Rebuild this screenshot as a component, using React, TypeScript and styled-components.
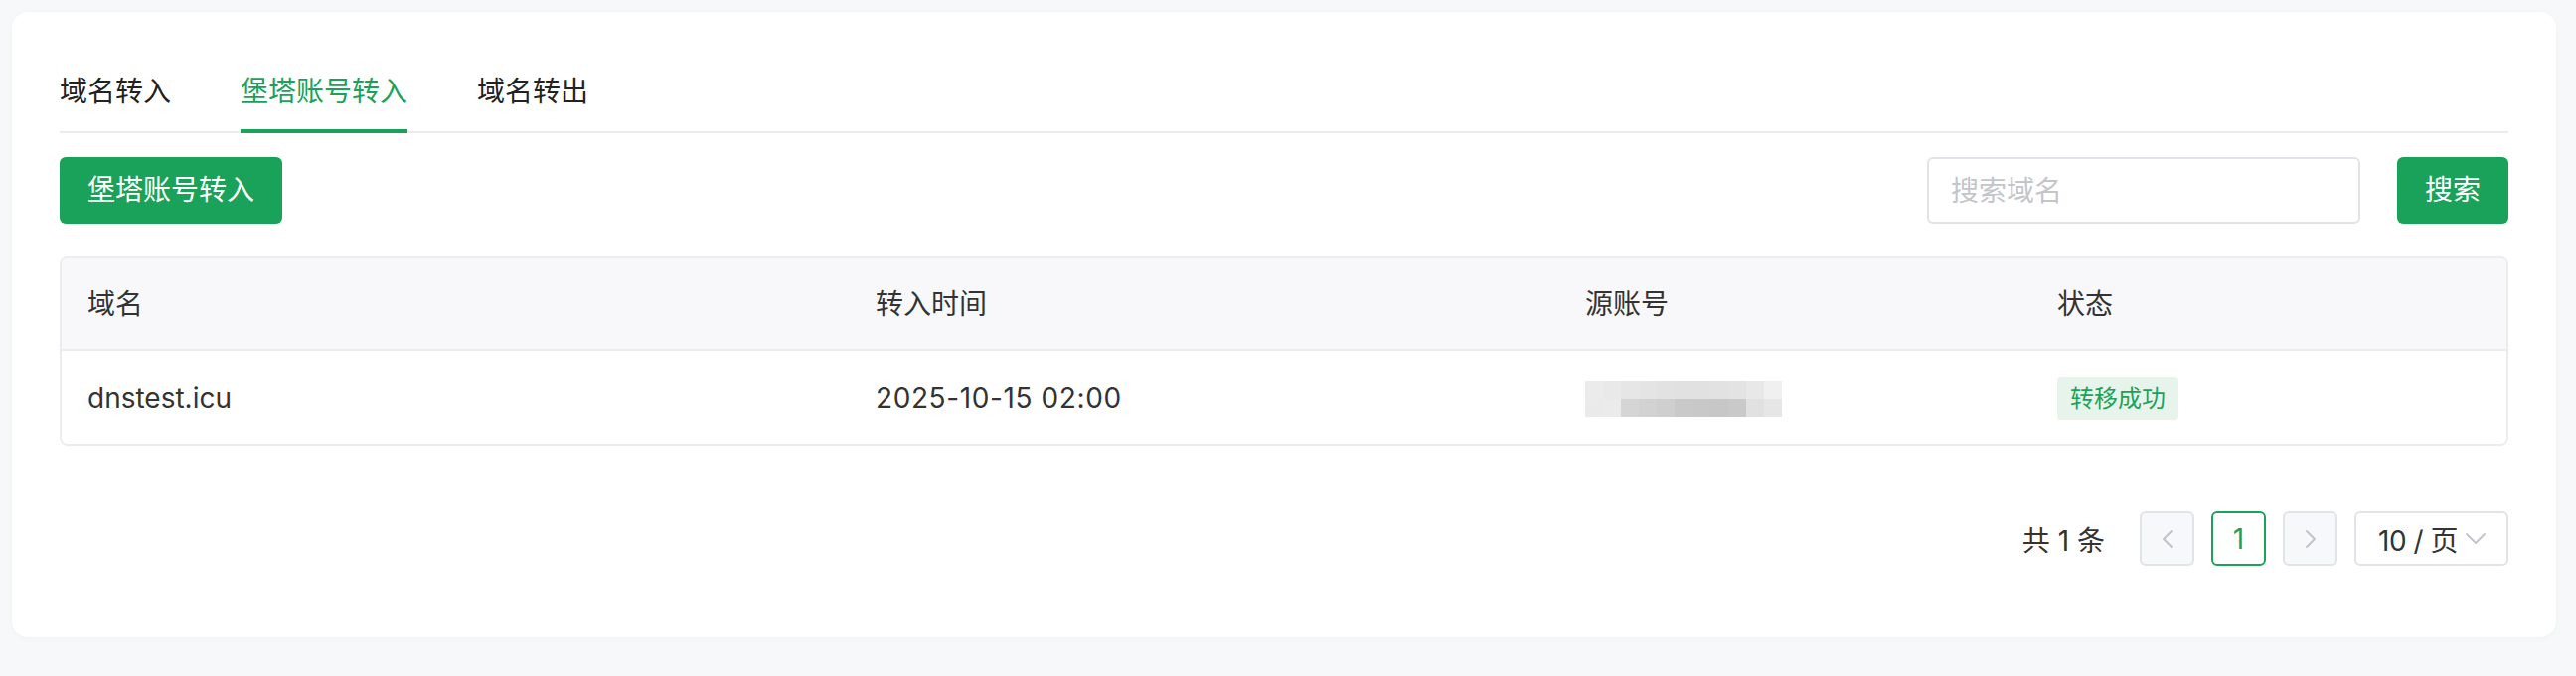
import React from "react";
import styled, { createGlobalStyle } from "styled-components";

const GREEN = "#1ba25a";

const GlobalStyle = createGlobalStyle`
  html, body {
    margin: 0;
    padding: 0;
    background: #f7f8fa;
  }
  body {
    font-family: Inter, "Noto Sans CJK SC", sans-serif;
    color: #333333;
  }
  * { box-sizing: border-box; }
`;

const Page = styled.div`
  height: 680px;
  padding: 12px 20px 0 12px;
  background: #f7f8fa;
  overflow: hidden;
`;

const Card = styled.div`
  background: #ffffff;
  border-radius: 16px;
  padding: 60px 48px 72px;
  box-shadow: 0 1px 6px rgba(0, 0, 0, 0.035);
`;

const TabNav = styled.div`
  display: flex;
  gap: 70px;
  border-bottom: 2px solid #ebecf0;
`;

const Tab = styled.div<{ $active?: boolean }>`
  font-size: 28px;
  line-height: 40px;
  padding-bottom: 18px;
  margin-bottom: -2px;
  color: ${(p) => (p.$active ? GREEN : "#222222")};
  border-bottom: 4px solid ${(p) => (p.$active ? GREEN : "transparent")};
  cursor: pointer;
`;

const Toolbar = styled.div`
  display: flex;
  justify-content: space-between;
  align-items: center;
  margin-top: 24px;
`;

const SearchGroup = styled.div`
  display: flex;
  align-items: center;
  gap: 37px;
`;

const PrimaryButton = styled.button<{ $pad?: number }>`
  height: 67px;
  padding: 0 ${(p) => p.$pad ?? 28}px;
  border: none;
  border-radius: 6px;
  background: ${GREEN};
  color: #ffffff;
  font-family: inherit;
  font-size: 28px;
  line-height: 67px;
  cursor: pointer;
`;

const SearchInput = styled.input`
  width: 436px;
  height: 67px;
  padding: 0 22px;
  border: 2px solid #e2e3e8;
  border-radius: 6px;
  font-family: inherit;
  font-size: 28px;
  color: #333;
  outline: none;
  &::placeholder {
    color: #c3c5cb;
  }
`;

const Table = styled.div`
  margin-top: 33px;
  border: 2px solid #ececf0;
  border-radius: 8px;
  overflow: hidden;
`;

const Row = styled.div<{ $head?: boolean }>`
  display: grid;
  grid-template-columns: 793px 714px 475px 1fr;
  align-items: center;
  height: ${(p) => (p.$head ? 93 : 94)}px;
  background: ${(p) => (p.$head ? "#f8f8fa" : "#ffffff")};
  border-bottom: ${(p) => (p.$head ? "2px solid #ececf0" : "none")};
`;

const Cell = styled.div<{ $spacing?: number }>`
  padding: 0 26px;
  font-size: 28px;
  line-height: 40px;
  color: #333333;
  white-space: nowrap;
  letter-spacing: ${(p) => p.$spacing ?? 0}px;
`;

const Mosaic = styled.div`
  display: grid;
  grid-template-columns: repeat(11, 18px);
  grid-template-rows: 18px 18px;
  margin-top: 2px;
`;

const Pixel = styled.span<{ $c: string }>`
  display: block;
  background: ${(p) => p.$c};
`;

const Badge = styled.span`
  display: inline-block;
  height: 43px;
  padding: 0 13px;
  border-radius: 4px;
  background: #e7f4ec;
  color: ${GREEN};
  font-size: 24px;
  line-height: 43px;
  letter-spacing: 0;
`;

const Pagination = styled.div`
  display: flex;
  justify-content: flex-end;
  align-items: center;
  gap: 17px;
  margin-top: 65px;
`;

const Total = styled.span`
  font-size: 28px;
  color: #333;
  margin-right: 18px;
`;

const PageBox = styled.div<{ $active?: boolean; $disabled?: boolean }>`
  width: 55px;
  height: 55px;
  display: flex;
  align-items: center;
  justify-content: center;
  border: 2px solid ${(p) => (p.$active ? GREEN : "#e2e3e8")};
  border-radius: 6px;
  background: ${(p) => (p.$disabled ? "#f7f8fa" : "#ffffff")};
  color: ${(p) => (p.$active ? GREEN : "#333")};
  font-size: 28px;
`;

const SizeSelect = styled.div`
  width: 155px;
  height: 55px;
  display: flex;
  align-items: center;
  gap: 8px;
  padding: 0 0 0 22px;
  border: 2px solid #e2e3e8;
  border-radius: 6px;
  font-size: 28px;
  color: #333;
`;

const SizeText = styled.span`
  letter-spacing: -0.5px;
`;

const topRow = [
  "#ebebeb", "#e9e9e9", "#e6e6e6", "#e4e4e4", "#e2e2e2", "#e1e1e1",
  "#e1e1e1", "#e2e2e2", "#e3e3e3", "#e8e8e8", "#f0f0f0",
];
const bottomRow = [
  "#eaeaea", "#ebebeb", "#d5d5d5", "#d2d2d2", "#cfcfcf", "#c9c9c9",
  "#c8c8c8", "#c7c7c7", "#c9c9c9", "#e1e1e1", "#e6e6e6",
];

const ChevronLeft = () => (
  <svg width="12" height="20" viewBox="0 0 12 20" fill="none">
    <polyline points="10,2 2,10 10,18" stroke="#c0c3ca" strokeWidth="2" strokeLinecap="round" strokeLinejoin="round" />
  </svg>
);

const ChevronRight = () => (
  <svg width="12" height="20" viewBox="0 0 12 20" fill="none">
    <polyline points="2,2 10,10 2,18" stroke="#c0c3ca" strokeWidth="2" strokeLinecap="round" strokeLinejoin="round" />
  </svg>
);

const ChevronDown = () => (
  <svg width="20" height="12" viewBox="0 0 20 12" fill="none">
    <polyline points="1,1 10,10 19,1" stroke="#c0c3ca" strokeWidth="1.8" strokeLinecap="round" strokeLinejoin="round" />
  </svg>
);

export default function App() {
  return (
    <>
      <GlobalStyle />
      <Page>
        <Card>
          <TabNav>
            <Tab>域名转入</Tab>
            <Tab $active>堡塔账号转入</Tab>
            <Tab>域名转出</Tab>
          </TabNav>

          <Toolbar>
            <PrimaryButton>堡塔账号转入</PrimaryButton>
            <SearchGroup>
              <SearchInput placeholder="搜索域名" />
              <PrimaryButton $pad={28}>搜索</PrimaryButton>
            </SearchGroup>
          </Toolbar>

          <Table>
            <Row $head>
              <Cell>域名</Cell>
              <Cell>转入时间</Cell>
              <Cell>源账号</Cell>
              <Cell>状态</Cell>
            </Row>
            <Row>
              <Cell>dnstest.icu</Cell>
              <Cell $spacing={0.6}>2025-10-15 02:00</Cell>
              <Cell>
                <Mosaic>
                  {topRow.map((c, i) => (
                    <Pixel key={"t" + i} $c={c} />
                  ))}
                  {bottomRow.map((c, i) => (
                    <Pixel key={"b" + i} $c={c} />
                  ))}
                </Mosaic>
              </Cell>
              <Cell>
                <Badge>转移成功</Badge>
              </Cell>
            </Row>
          </Table>

          <Pagination>
            <Total>共 1 条</Total>
            <PageBox $disabled>
              <ChevronLeft />
            </PageBox>
            <PageBox $active>1</PageBox>
            <PageBox $disabled>
              <ChevronRight />
            </PageBox>
            <SizeSelect>
              <SizeText>10 / 页</SizeText>
              <ChevronDown />
            </SizeSelect>
          </Pagination>
        </Card>
      </Page>
    </>
  );
}
